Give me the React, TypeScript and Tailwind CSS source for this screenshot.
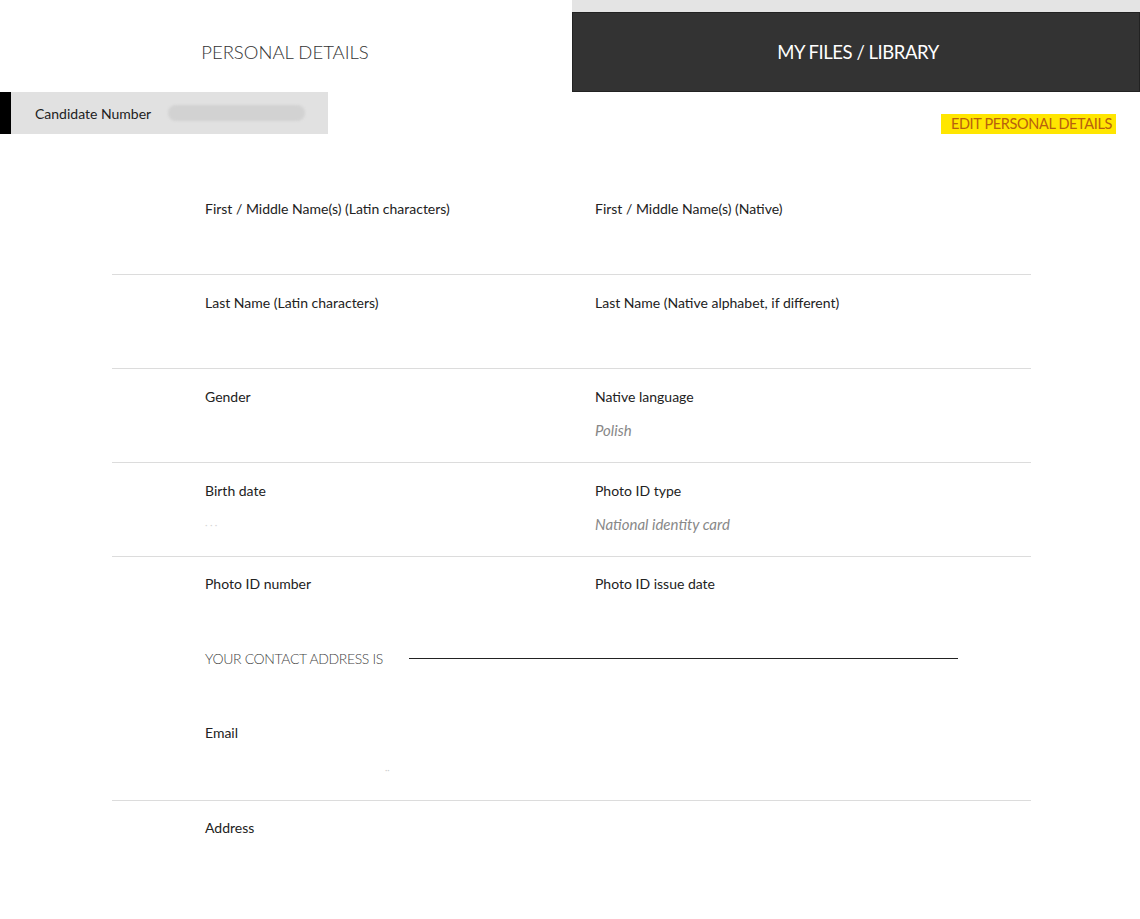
import React from "react";

type Field = { label: string; value?: string; faint?: boolean };

const rows: [Field, Field][] = [
  [{ label: "First / Middle Name(s) (Latin characters)" }, { label: "First / Middle Name(s) (Native)" }],
  [{ label: "Last Name (Latin characters)" }, { label: "Last Name (Native alphabet, if different)" }],
  [{ label: "Gender" }, { label: "Native language", value: "Polish" }],
  [{ label: "Birth date", value: "· ·  ·", faint: true }, { label: "Photo ID type", value: "National identity card" }],
];

const font = { fontFamily: "Lato, 'Open Sans', sans-serif" };

const Cell = ({ field }: { field: Field }) => (
  <div>
    <div className="text-[14px] leading-[20px] text-[#222]">{field.label}</div>
    {field.value && (
      <div
        className={`mt-[13px] leading-[20px] italic ${field.faint ? "text-[#d8d8d8] text-[10px]" : "text-[15px] text-[#888]"}`}
      >
        {field.value}
      </div>
    )}
  </div>
);

export default function App() {
  return (
    <div className="min-h-screen bg-white" style={font}>
      {/* tabs */}
      <div className="flex h-[92px]">
        <div className="w-[572px] flex items-center justify-center pt-[14px]">
          <span className="ml-[-2px] text-[18.5px] font-light text-[#333]">PERSONAL DETAILS</span>
        </div>
        <div className="flex-1 flex flex-col">
          <div className="h-[12px] bg-[#e4e4e4]"></div>
          <div className="flex-1 bg-[#333] border border-[#222] flex items-center justify-center pt-[2px]">
            <span className="ml-[4px] text-[18.5px] tracking-tight text-white">MY FILES / LIBRARY</span>
          </div>
        </div>
      </div>

      {/* candidate number + edit */}
      <div className="flex items-end justify-between h-[42px]">
        <div className="flex h-full">
          <div className="w-[11px] bg-black"></div>
          <div className="w-[317px] bg-[#e1e1e1] flex items-center pl-[24px]">
            <span className="text-[14px] text-[#222]">Candidate Number</span>
            <span className="ml-[17px] w-[137px] h-[16px] rounded-full bg-[#d2d2d2] blur-[1px]"></span>
          </div>
        </div>
        <button className="mr-[24px] h-[20px] w-[175px] bg-[#ffe600] text-[14.5px] leading-[20px] text-[#b8600e] text-right pr-[4px] tracking-tight">
          EDIT PERSONAL DETAILS
        </button>
      </div>

      {/* details */}
      <div className="ml-[112px] w-[919px] mt-[47px]">
        {rows.map(([a, b], i) => (
          <div key={i} className="h-[94px] border-b border-[#dcdcdc] pt-[18px] pl-[93px] grid grid-cols-[390px_390px]">
            <Cell field={a} />
            <Cell field={b} />
          </div>
        ))}
        <div className="h-[85px] pt-[17px] pl-[93px] grid grid-cols-[390px_390px]">
          <Cell field={{ label: "Photo ID number" }} />
          <Cell field={{ label: "Photo ID issue date" }} />
        </div>
        <div className="h-[32px] pl-[93px] flex items-center">
          <span className="text-[14px] font-light tracking-tight text-[#444]">YOUR CONTACT ADDRESS IS</span>
          <div className="ml-[26px] w-[549px] h-px bg-[#222]"></div>
        </div>
        <div className="mt-[31px] h-[96px] border-b border-[#dcdcdc] pt-[18px] pl-[93px]">
          <div className="text-[14px] leading-[20px] text-[#222]">Email</div>
          <div className="mt-[17px] pl-[180px] text-[9px] leading-[20px] text-[#cfcfcf]">··</div>
        </div>
        <div className="h-[94px] pt-[17px] pl-[93px]">
          <div className="text-[14px] leading-[20px] text-[#222]">Address</div>
        </div>
      </div>
    </div>
  );
}
